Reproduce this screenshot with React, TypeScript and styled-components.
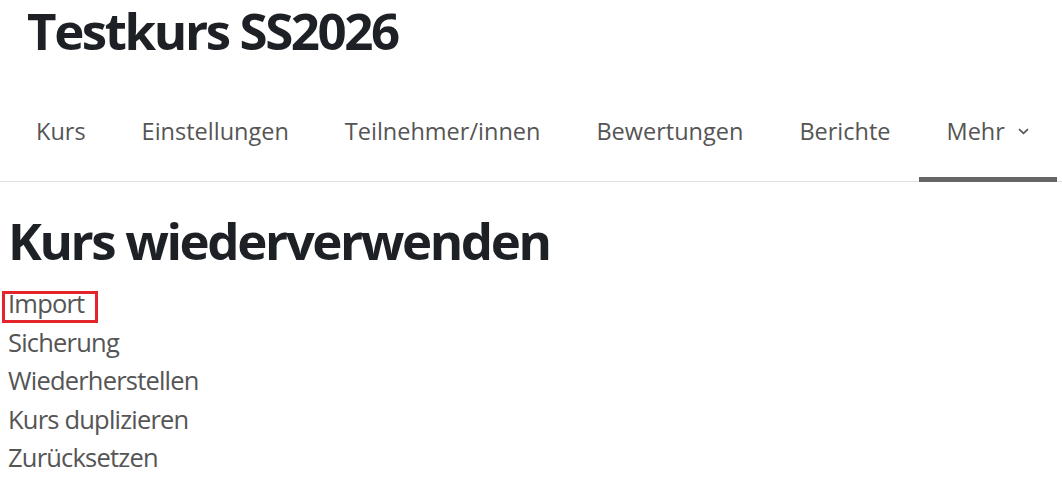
import React from 'react';
import styled, { createGlobalStyle } from 'styled-components';

const GlobalStyle = createGlobalStyle`
    html, body {
        margin: 0;
        padding: 0;
        background: #ffffff;
    }
    body {
        font-family: "Open Sans", "Noto Sans", sans-serif;
        color: #1d2125;
    }
`;

const Page = styled.div`
    width: 1062px;
`;

const CourseTitle = styled.h1`
    margin: 0;
    padding-left: 27px;
    font-size: 51px;
    line-height: 60px;
    font-weight: 700;
    letter-spacing: -2.4px;
    color: #1d2125;
`;

const Tabs = styled.ul`
    display: flex;
    list-style: none;
    margin: 24px 0 0;
    padding: 0 0 0 8px;
    border-bottom: 1px solid #dee2e6;
`;

const Tab = styled.li<{ $active?: boolean }>`
    display: flex;
    align-items: center;
    gap: 13px;
    padding: 30px 28px 29px;
    margin-bottom: -1px;
    font-size: 23.5px;
    line-height: 34px;
    color: #555555;
    border-bottom: 5px solid ${p => (p.$active ? '#666666' : 'transparent')};
`;

const Main = styled.main`
    padding: 0 8px;
`;

const Heading = styled.h2`
    margin: 27px 0 0;
    font-size: 51px;
    line-height: 62px;
    font-weight: 700;
    letter-spacing: -2.4px;
    color: #1d2125;
`;

const Links = styled.ul`
    list-style: none;
    margin: 13px 0 0;
    padding: 0;
`;

const LinkItem = styled.li`
    font-size: 25.5px;
    line-height: 38.5px;
    letter-spacing: -0.8px;
    color: #555555;
`;

const Highlight = styled.span`
    position: relative;

    &::after {
        content: '';
        position: absolute;
        left: -6px;
        right: -14px;
        top: 5px;
        bottom: -3px;
        border: 3px solid #e3242b;
        pointer-events: none;
    }
`;

const Chevron = () => (
    <svg width="11" height="7" viewBox="0 0 11 7" fill="none">
        <polyline points="1,1.2 5.5,5.4 10,1.2" stroke="#555555" strokeWidth="1.7" />
    </svg>
);

const tabs = ['Kurs', 'Einstellungen', 'Teilnehmer/innen', 'Bewertungen', 'Berichte'];
const links = ['Sicherung', 'Wiederherstellen', 'Kurs duplizieren', 'Zurücksetzen'];

const App: React.FC = () => {
    return (
        <Page>
            <GlobalStyle />
            <CourseTitle>Testkurs SS2026</CourseTitle>
            <Tabs>
                {tabs.map(t => (
                    <Tab key={t}>{t}</Tab>
                ))}
                <Tab $active>
                    Mehr
                    <Chevron />
                </Tab>
            </Tabs>
            <Main>
                <Heading>Kurs wiederverwenden</Heading>
                <Links>
                    <LinkItem>
                        <Highlight>Import</Highlight>
                    </LinkItem>
                    {links.map(l => (
                        <LinkItem key={l}>{l}</LinkItem>
                    ))}
                </Links>
            </Main>
        </Page>
    );
};

export default App;
